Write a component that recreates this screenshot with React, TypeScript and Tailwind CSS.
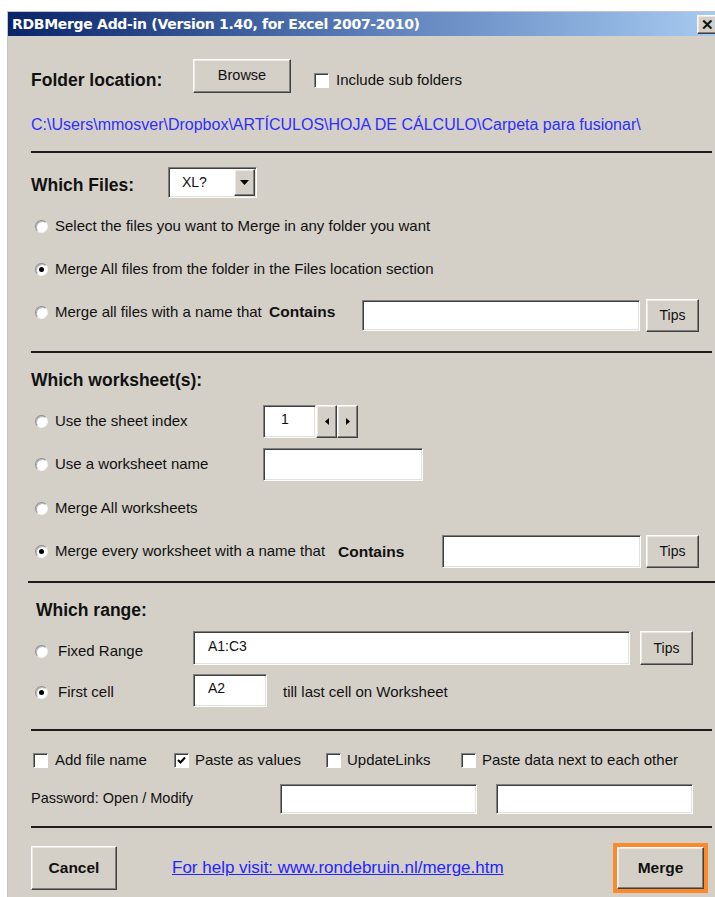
import type { ReactNode } from "react";

// classic 3D bevels
const raised =
  "border border-t-white border-l-white border-r-[#404040] border-b-[#404040] shadow-[inset_-1px_-1px_#808080,inset_1px_1px_#ece9e2] bg-[#d4d0c8]";
const sunken =
  "border border-t-[#808080] border-l-[#808080] border-r-white border-b-white shadow-[inset_1px_1px_#404040,inset_-1px_-1px_#e4e1da] bg-white";

function Button({ className = "", children }: { className?: string; children: ReactNode }) {
  return (
    <div className={`${raised} flex shrink-0 items-center justify-center ${className}`}>
      {children}
    </div>
  );
}

function TextBox({ className = "", children }: { className?: string; children?: ReactNode }) {
  return <div className={`${sunken} flex shrink-0 items-center ${className}`}>{children}</div>;
}

function Radio({ checked }: { checked?: boolean }) {
  return (
    <span className="flex h-[13px] w-[13px] shrink-0 items-center justify-center rounded-full border border-t-[#8a8a8a] border-l-[#8a8a8a] border-r-[#f4f4f4] border-b-[#f4f4f4] bg-white shadow-[inset_1px_1px_#b8b8b8]">
      {checked && <span className="h-[5px] w-[5px] rounded-full bg-black" />}
    </span>
  );
}

function CheckBox({ checked, className = "" }: { checked?: boolean; className?: string }) {
  return (
    <span
      className={`flex h-[15px] w-[15px] shrink-0 items-center justify-center border border-t-[#808080] border-l-[#808080] border-r-white border-b-white bg-white shadow-[inset_1px_1px_#404040] ${className}`}
    >
      {checked && (
        <svg width="9" height="9" viewBox="0 0 9 9">
          <path d="M1 4 L3.5 6.5 L8 1.5" stroke="#000" strokeWidth="2" fill="none" />
        </svg>
      )}
    </span>
  );
}

function Rule({ className = "" }: { className?: string }) {
  return <div className={`h-[2px] w-[681px] bg-[#1e1e1e] ${className}`} />;
}

function Tips() {
  return <Button className="h-[33px] w-[53px] text-[14px]">Tips</Button>;
}

export default function App() {
  return (
    <div className="min-h-screen bg-white pl-[7px] pt-[11px] font-['Liberation_Sans',Arial,sans-serif] text-[15px] text-[#111]">
      <div className="h-[886px] w-[708px] overflow-hidden border-l border-t border-[#c4c4c4] bg-[#d4d0c8]">
        {/* title bar */}
        <div className="flex h-[24px] items-center justify-between bg-linear-to-r from-[#0a246a] via-[#5a7db8] to-[#a6caf0] pl-[4px]">
          <span className="font-['DejaVu_Sans',sans-serif] text-[14px] font-bold tracking-[-0.3px] text-white">
            RDBMerge Add-in (Version 1.40, for Excel 2007-2010)
          </span>
          <Button className="-mr-[3px] h-[19px] w-[21px] text-[15px] font-bold leading-none">✕</Button>
        </div>

        <div className="flex flex-col pl-[23px]">
          {/* folder */}
          <div className="mt-[23px] flex h-[34px] items-center">
            <span className="w-[162px] pt-[8px] text-[17.5px] font-bold">Folder location:</span>
            <Button className="h-[34px] w-[98px] text-[14.5px]">Browse</Button>
            <CheckBox className="ml-[23px] mt-[8px]" />
            <span className="ml-[7px] mt-[8px]">Include sub folders</span>
          </div>
          <div className="mt-[23px] h-[18px] text-[16px] leading-[18px] text-[#2e2eff]">
            C:\Users\mmosver\Dropbox\ARTÍCULOS\HOJA DE CÁLCULO\Carpeta para fusionar\
          </div>
          <Rule className="mt-[17px]" />

          {/* which files */}
          <div className="mt-[14px] flex h-[31px] items-center">
            <span className="w-[137px] pt-[5px] text-[17.5px] font-bold">Which Files:</span>
            <TextBox className="h-[31px] w-[89px] justify-between pr-[1px]">
              <span className="pl-[13px] text-[14px]">XL?</span>
              <Button className="h-[27px] w-[21px]">
                <svg width="9" height="5" viewBox="0 0 9 5">
                  <path d="M0 0 H9 L4.5 5 Z" fill="#000" />
                </svg>
              </Button>
            </TextBox>
          </div>
          <div className="mt-[16px] flex h-[24px] items-center gap-[7px] pl-[4px]">
            <Radio />
            <span>Select the files you want to Merge in any folder you want</span>
          </div>
          <div className="mt-[19px] flex h-[24px] items-center gap-[7px] pl-[4px]">
            <Radio checked />
            <span>Merge All files from the folder in the Files location section</span>
          </div>
          <div className="mt-[17px] flex h-[34px] items-center pl-[4px]">
            <div className="-mt-[6px] flex w-[234px] items-center gap-[7px]">
              <Radio />
              <span>Merge all files with a name that</span>
            </div>
            <span className="-mt-[6px] w-[93px] text-[15.5px] font-bold">Contains</span>
            <TextBox className="h-[31px] w-[278px]" />
            <div className="ml-[6px]">
              <Tips />
            </div>
          </div>
          <Rule className="mt-[19px]" />

          {/* which worksheets */}
          <div className="mt-[17px] h-[20px] text-[17.5px] font-bold leading-[20px]">Which worksheet(s):</div>
          <div className="mt-[15px] flex h-[33px] items-center pl-[4px]">
            <div className="flex w-[228px] items-center gap-[7px]">
              <Radio />
              <span>Use the sheet index</span>
            </div>
            <TextBox className="h-[33px] w-[53px] pb-[4px] pl-[17px] text-[14px]">1</TextBox>
            <Button className="h-[33px] w-[21px]">
              <svg width="4" height="7" viewBox="0 0 4 7">
                <path d="M4 0 V7 L0 3.5 Z" fill="#000" />
              </svg>
            </Button>
            <Button className="h-[33px] w-[21px]">
              <svg width="4" height="7" viewBox="0 0 4 7">
                <path d="M0 0 V7 L4 3.5 Z" fill="#000" />
              </svg>
            </Button>
          </div>
          <div className="mt-[10px] flex h-[33px] items-center pl-[4px]">
            <div className="flex w-[228px] items-center gap-[7px]">
              <Radio />
              <span>Use a worksheet name</span>
            </div>
            <TextBox className="h-[33px] w-[160px]" />
          </div>
          <div className="mt-[15px] flex h-[24px] items-center gap-[7px] pl-[4px]">
            <Radio />
            <span>Merge All worksheets</span>
          </div>
          <div className="mt-[15px] flex h-[33px] items-center pl-[4px]">
            <div className="flex w-[303px] items-center gap-[7px]">
              <Radio checked />
              <span>Merge every worksheet with a name that</span>
            </div>
            <span className="w-[104px] text-[15.5px] font-bold">Contains</span>
            <TextBox className="h-[33px] w-[199px]" />
            <div className="ml-[5px]">
              <Tips />
            </div>
          </div>
          <Rule className="-ml-[3px] mt-[13px] w-[690px]" />

          {/* which range */}
          <div className="mt-[17px] h-[20px] pl-[5px] text-[17.5px] font-bold leading-[20px]">Which range:</div>
          <div className="mt-[11px] flex h-[34px] items-center pl-[4px]">
            <div className="mt-[6px] flex w-[158px] items-center gap-[10px]">
              <Radio />
              <span>Fixed Range</span>
            </div>
            <TextBox className="h-[34px] w-[437px] pb-[3px] pl-[14px] text-[14px]">A1:C3</TextBox>
            <div className="ml-[10px]">
              <Button className="h-[34px] w-[53px] text-[14px]">Tips</Button>
            </div>
          </div>
          <div className="mt-[9px] flex h-[33px] items-center pl-[4px]">
            <div className="mt-[3px] flex w-[158px] items-center gap-[10px]">
              <Radio checked />
              <span>First cell</span>
            </div>
            <TextBox className="h-[33px] w-[74px] pb-[4px] pl-[14px] text-[14px]">A2</TextBox>
            <span className="ml-[16px] mt-[4px]">till last cell on Worksheet</span>
          </div>
          <Rule className="mt-[22px]" />

          {/* options */}
          <div className="mt-[19px] flex h-[20px] items-center pl-[2px]">
            <div className="flex w-[141px] items-center gap-[7px]">
              <CheckBox />
              <span>Add file name</span>
            </div>
            <div className="flex w-[152px] items-center gap-[6px]">
              <CheckBox checked />
              <span>Paste as values</span>
            </div>
            <div className="flex w-[135px] items-center gap-[6px]">
              <CheckBox />
              <span>UpdateLinks</span>
            </div>
            <div className="flex items-center gap-[6px]">
              <CheckBox />
              <span>Paste data next to each other</span>
            </div>
          </div>
          <div className="mt-[14px] flex h-[30px] items-center">
            <span className="w-[249px] text-[14.5px]">Password: Open / Modify</span>
            <TextBox className="h-[30px] w-[197px]" />
            <TextBox className="ml-[19px] h-[30px] w-[197px]" />
          </div>
          <Rule className="mt-[12px]" />

          {/* actions */}
          <div className="mt-[15px] flex h-[50px] items-center">
            <Button className="h-[44px] w-[86px] text-[15.5px] font-bold">Cancel</Button>
            <span className="ml-[55px] text-[17px] text-[#2424ff] underline">
              For help visit: www.rondebruin.nl/merge.htm
            </span>
            <div className="ml-auto mr-[7px] h-[50px] w-[95px] border-4 border-[#fb8a2c]">
              <Button className="h-full w-full text-[15.5px] font-bold">Merge</Button>
            </div>
          </div>
        </div>
      </div>
    </div>
  );
}
